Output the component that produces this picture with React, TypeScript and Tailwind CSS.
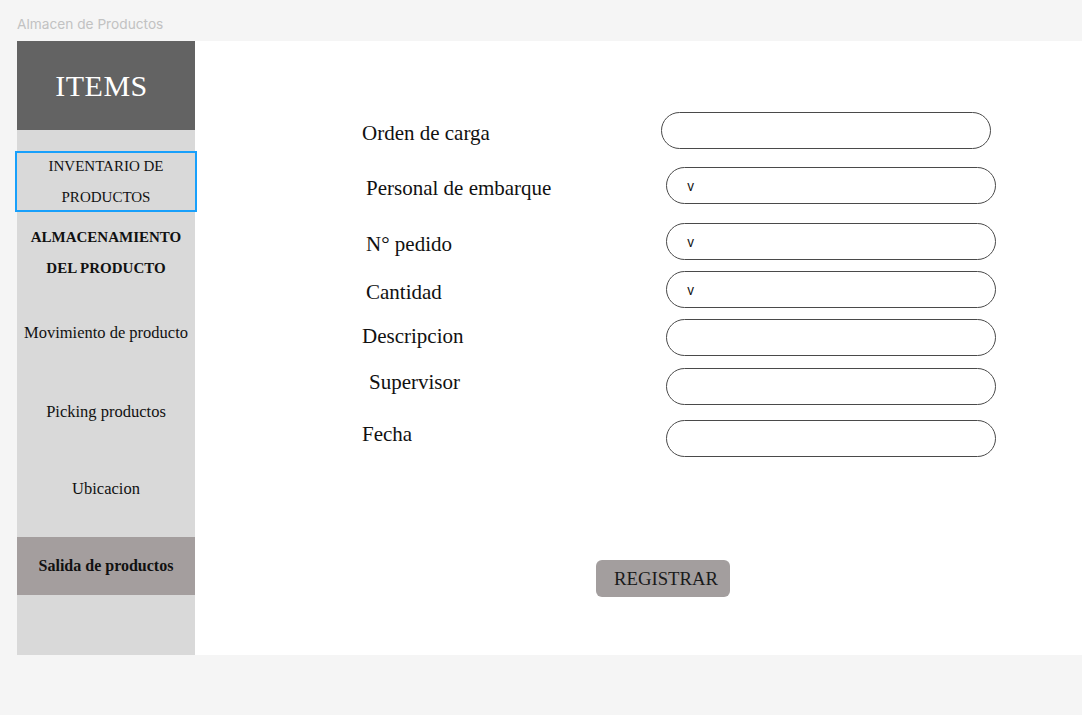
const serif = "font-['Liberation_Serif','Times_New_Roman',serif]";

const menu = [
  { label: "Movimiento de producto", h: "h-[100px]" },
  { label: "Picking productos", h: "h-[58px]" },
  { label: "Ubicacion", h: "h-[96px]" },
];

const fields = [
  { label: "Orden de carga", mt: "mt-[71px]", labelPl: "pl-0", labelMt: "mt-[8px]", inputMl: "ml-0", select: false },
  { label: "Personal de embarque", mt: "mt-[18px]", labelPl: "pl-[4px]", labelMt: "mt-[8px]", inputMl: "ml-[5px]", select: true },
  { label: "N° pedido", mt: "mt-[19px]", labelPl: "pl-[4px]", labelMt: "mt-[8px]", inputMl: "ml-[5px]", select: true },
  { label: "Cantidad", mt: "mt-[11px]", labelPl: "pl-[4px]", labelMt: "mt-[8px]", inputMl: "ml-[5px]", select: true },
  { label: "Descripcion", mt: "mt-[11px]", labelPl: "pl-0", labelMt: "mt-[4px]", inputMl: "ml-[5px]", select: false },
  { label: "Supervisor", mt: "mt-[12px]", labelPl: "pl-[7px]", labelMt: "mt-[1px]", inputMl: "ml-[5px]", select: false },
  { label: "Fecha", mt: "mt-[15px]", labelPl: "pl-0", labelMt: "mt-[1px]", inputMl: "ml-[5px]", select: false },
];

export default function App() {
  return (
    <div className="min-h-[715px] w-[1082px] bg-[#f5f5f5] font-['Inter',sans-serif]">
      <div className="h-[41px] pl-[17px] pt-[15px] text-[13.7px] leading-[18px] text-[#c2c2c2]">Almacen de Productos</div>
      <div className="ml-[17px] flex h-[614px]">
        <aside className={`relative z-10 flex w-[178px] flex-col bg-[#d9d9d9] text-[#111] ${serif}`}>
          <div className="flex h-[89px] items-center justify-center bg-[#636363] pr-[9px] text-[30px] tracking-[0.5px] text-white">ITEMS</div>
          <div className="h-[21px]" />
          <div className="-mx-[2px] flex h-[61px] flex-col items-center justify-center border-2 border-[#18a0fb] text-[15px] leading-[31px]">
            <span>INVENTARIO DE</span>
            <span>PRODUCTOS</span>
          </div>
          <div className="flex h-[71px] flex-col items-center pt-[10px] text-[15px] font-bold leading-[31px]">
            <span>ALMACENAMIENTO</span>
            <span>DEL PRODUCTO</span>
          </div>
          {menu.map((m) => (
            <div key={m.label} className={`flex ${m.h} items-center justify-center text-[16.5px]`}>{m.label}</div>
          ))}
          <div className="flex h-[58px] items-center justify-center bg-[#a49e9e] text-[16px] font-bold">Salida de productos</div>
        </aside>
        <main className={`flex flex-1 flex-col bg-white pl-[167px] text-[#111] ${serif}`}>
          {fields.map((f) => (
            <div key={f.label} className={`flex ${f.mt}`}>
              <label className={`h-[27px] w-[299px] shrink-0 whitespace-nowrap ${f.labelPl} ${f.labelMt} text-[21px] leading-[27px]`}>{f.label}</label>
              <div className={`${f.inputMl} flex h-[37px] w-[330px] items-center rounded-full border border-[#4a4a4a] pl-[20px] pt-[2px] font-['Inter',sans-serif] text-[13px]`}>
                {f.select ? "v" : ""}
              </div>
            </div>
          ))}
          <button className="ml-[234px] mt-[103px] h-[37px] w-[134px] rounded-[6px] bg-[#a39e9e] pl-[6px] pt-[2px] text-[18.7px] text-[#1a1a1a]">REGISTRAR</button>
        </main>
      </div>
    </div>
  );
}
